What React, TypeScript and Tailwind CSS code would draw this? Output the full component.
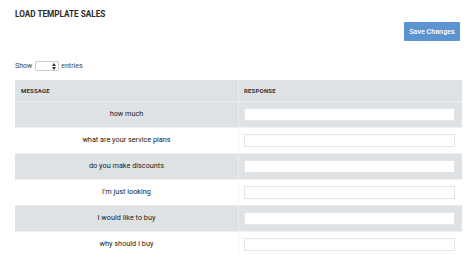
import React from "react";

const rows = [
  "how much",
  "what are your service plans",
  "do you make discounts",
  "I'm just looking",
  "I would like to buy",
  "why should I buy",
];

export default function App() {
  return (
    <main
      className="bg-white w-[474px] h-[255px] overflow-hidden text-[#333]"
      style={{ fontFamily: "Roboto, 'Liberation Sans', sans-serif" }}
    >
      <div className="pl-[15px] pr-[12px]">
        {/* Title */}
        <h1 className="pt-[9px] h-[19px] text-[8.2px] leading-[10px] font-bold text-[#2b2b2b] uppercase">
          Load Template Sales
        </h1>

        {/* Save button */}
        <div className="mt-[3px] flex justify-end pr-[2px]">
          <button className="w-[56px] h-[19px] bg-[#5b93d3] text-white text-[7.2px] font-medium leading-none rounded-[1px]">
            Save Changes
          </button>
        </div>

        {/* Entries selector */}
        <div className="mt-[20px] h-[10px] flex items-center text-[7px] text-[#444]">
          <span>Show</span>
          <div className="ml-[3px] w-[24px] h-[10px] border border-[#c9ccd0] rounded-[2px] bg-white flex items-center justify-end pr-[2px]">
            <svg width="4" height="7" viewBox="0 0 4 7">
              <path d="M0 3 L2 0 L4 3 Z" fill="#333" />
              <path d="M0 4 L2 7 L4 4 Z" fill="#333" />
            </svg>
          </div>
          <span className="ml-[2px]">entries</span>
        </div>

        {/* Table */}
        <div className="mt-[9px] w-[447px]">
          <div className="grid grid-cols-[223px_1px_223px] h-[21px] bg-[#dfe2e5]">
            <div className="flex items-center pl-[6px] text-[6px] font-bold tracking-[0.2px] text-[#333]">
              MESSAGE
            </div>
            <div className="bg-[#eceef0]" />
            <div className="flex items-center pl-[5px] text-[6px] font-bold tracking-[0.2px] text-[#333]">
              RESPONSE
            </div>
          </div>
          {rows.map((r, i) => (
            <div
              key={r}
              className={
                i % 2 === 0
                  ? "grid grid-cols-[223px_1px_223px] h-[26px] bg-[#dfe2e5] border-t border-[#eceef0]"
                  : "grid grid-cols-[223px_1px_223px] h-[26px] bg-white border-t border-[#f0f1f2]"
              }
            >
              <div className="flex items-center justify-center text-[7.3px] text-[#222]">{r}</div>
              <div className={i % 2 === 0 ? "bg-[#eceef0]" : "bg-[#f3f4f5]"} />
              <div className="flex items-center pl-[5px] pr-[7px]">
                <div className="w-full h-[13px] bg-white border border-[#e3e5e8]" />
              </div>
            </div>
          ))}
        </div>
      </div>
    </main>
  );
}
